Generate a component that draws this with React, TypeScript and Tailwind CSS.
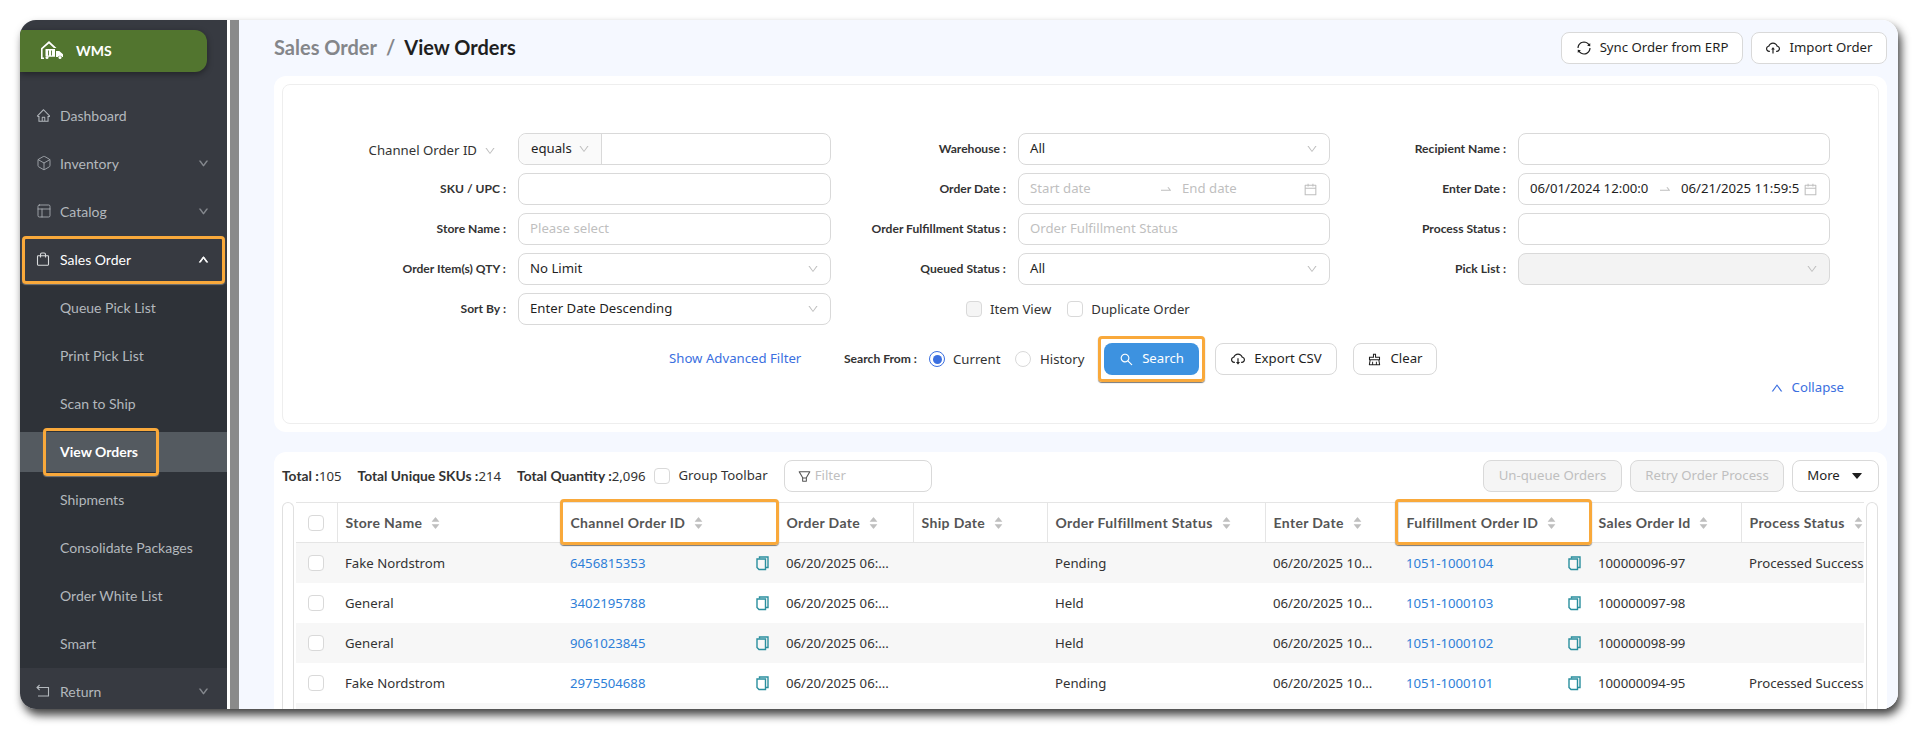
import React from "react";
import {
  AiOutlineDown, AiOutlineUp, AiFillCaretUp, AiFillCaretDown, AiOutlineSearch, AiOutlineCloudDownload,
  AiOutlineCloudUpload, AiOutlineClear, AiOutlineCalendar, AiOutlineSwapRight, AiOutlineSync, AiOutlineFilter,
  AiOutlineHome,
} from "react-icons/ai";
import { Box, PanelsTopLeft } from "lucide-react";

const noto = "font-['Noto_Sans',sans-serif]";
const lato = "font-['Lato',sans-serif]";

function Highlight({ className }: { className: string }) {
  return <div className={`pointer-events-none absolute rounded-[4px] border-[3px] border-[#f9a93b] shadow-[0_1px_1px_#777] ${className}`} />;
}

function Bag() {
  return (
    <svg width="14" height="14" viewBox="0 0 14 14" fill="none" stroke="#d8dadc" strokeWidth="1.1">
      <rect x="1.5" y="3.8" width="11" height="9.4" rx="0.6" />
      <path d="M4.5 5.5V2.4a1.4 1.4 0 0 1 1.4-1.4h2.2a1.4 1.4 0 0 1 1.4 1.4v3.1" />
    </svg>
  );
}

function ReturnIcon() {
  return (
    <svg width="14" height="14" viewBox="0 0 14 14" fill="none" stroke="#b3b8bd" strokeWidth="1.1">
      <path d="M1 3.5h11.5v8.500H2" />
      <path d="M3.600 1 1 3.500 3.600 6" />
    </svg>
  );
}

function Logo() {
  return (
    <svg width="22" height="18" viewBox="0 0 22 18" fill="white">
      <path d="M8 0 0 7.200V18h3v-1.500H1.600V8L8 2.400 12.800 7H15.500L8 0Z" />
      <path d="M4.500 8h9.500v7.800H7a2 2 0 0 0-2.500-.4V8Z" fill="white" />
      <path d="M7.500 9.500v5M10.500 9.500v5" stroke="#52752f" strokeWidth="0.9" />
      <path d="M15 10h3.300L22 13.300V16h-1a2.200 2.200 0 0 0-4 0h-2V10Z" />
      <circle cx="19" cy="16.500" r="1.500" />
      <circle cx="6" cy="16.500" r="1.500" />
    </svg>
  );
}

function NavItem({ icon, label, chevron, active }: { icon: React.ReactNode; label: string; chevron?: "up" | "down"; active?: boolean }) {
  return (
    <div className={`relative flex h-12 items-center pb-[2px] pl-4 pr-[18px] text-[14px] ${active ? "text-white" : "text-[#b3b8bd]"}`}>
      <span className="flex w-6 shrink-0 items-center">{icon}</span>
      <span className="flex-1">{label}</span>
      {chevron === "down" && <AiOutlineDown size={11} className="text-[#8b8f94]" strokeWidth={50} />}
      {chevron === "up" && <AiOutlineUp size={11} className="text-white" strokeWidth={90} />}
      {active && <Highlight className="left-[2px] right-[2px] top-0 bottom-0" />}
    </div>
  );
}

function SubItem({ label, active }: { label: string; active?: boolean }) {
  return (
    <div className={`relative mb-2 flex h-10 items-center pb-[2px] pl-10 text-[14px] last:mb-0 ${active ? "bg-[#545a60] font-bold text-white" : "text-[#b3b8bd]"}`}>
      {label}
      {active && <Highlight className="left-[23px] w-[116px] -top-1 -bottom-1" />}
    </div>
  );
}

function Sidebar() {
  return (
    <aside className={`w-[207px] shrink-0 bg-[#373a41] ${lato}`}>
      <div className="mt-[10px] flex h-[42px] w-[187px] items-center rounded-r-xl bg-[#52752f] pb-[2px] pl-[21px] text-[14px] font-bold text-white shadow-[0_2px_6px_rgba(0,0,0,0.4)]">
        <span className="mr-[13px] flex"><Logo /></span>WMS
      </div>
      <div className="mt-5">
        <NavItem icon={<AiOutlineHome size={15} />} label="Dashboard" />
        <NavItem icon={<Box size={16} strokeWidth={1.2} />} label="Inventory" chevron="down" />
        <NavItem icon={<PanelsTopLeft size={16} strokeWidth={1.2} />} label="Catalog" chevron="down" />
        <NavItem icon={<Bag />} label="Sales Order" chevron="up" active />
        <div className="bg-[#2e3238] py-1">
          <SubItem label="Queue Pick List" />
          <SubItem label="Print Pick List" />
          <SubItem label="Scan to Ship" />
          <SubItem label="View Orders" active />
          <SubItem label="Shipments" />
          <SubItem label="Consolidate Packages" />
          <SubItem label="Order White List" />
          <SubItem label="Smart" />
        </div>
        <NavItem icon={<ReturnIcon />} label="Return" chevron="down" />
      </div>
    </aside>
  );
}

function Btn({ children, className = "" }: { children: React.ReactNode; className?: string }) {
  return (
    <div className={`flex h-8 shrink-0 items-center justify-center rounded-lg border border-[#d9d9d9] bg-white text-[13.2px] text-[#1f1f1f] ${noto} ${className}`}>
      {children}
    </div>
  );
}

function Field({ label, children, plain }: { label: React.ReactNode; children: React.ReactNode; plain?: boolean }) {
  return (
    <div className="flex h-8 items-center">
      <div className={`mr-3 w-[175px] shrink-0 text-right ${plain ? "" : `pt-px text-[12.1px] font-bold text-[#333] ${lato}`}`}>{label}</div>
      <div className="min-w-0 flex-1">{children}</div>
    </div>
  );
}

function Box1({ text, placeholder, chevron, disabled }: { text?: string; placeholder?: string; chevron?: boolean; disabled?: boolean }) {
  return (
    <div className={`flex h-8 items-center justify-between rounded-lg border border-[#d9d9d9] pl-[11px] pr-[11px] text-[13.2px] ${noto} ${disabled ? "bg-[#f3f3f3]" : "bg-white"} ${placeholder ? "text-[#bfbfbf]" : "text-[#1f1f1f]"}`}>
      <span>{text ?? placeholder}</span>
      {chevron && <AiOutlineDown size={12} className="text-[#bfbfbf]" />}
    </div>
  );
}

function DateBox({ from, to, placeholder }: { from: string; to: string; placeholder?: boolean }) {
  return (
    <div className={`flex h-8 items-center rounded-lg border border-[#d9d9d9] bg-white pl-[11px] pr-[11px] text-[13.2px] ${noto} ${placeholder ? "text-[#bfbfbf]" : "text-[#1f1f1f]"}`}>
      <span className={placeholder ? "w-[129px]" : "w-[119px] whitespace-nowrap"}>{from}</span>
      <AiOutlineSwapRight size={14} className={`text-[#bfbfbf] ${placeholder ? "" : "mx-[9px]"}`} />
      <span className={placeholder ? "ml-[9px] flex-1" : "flex-1 whitespace-nowrap"}>{to}</span>
      <AiOutlineCalendar size={15} className="shrink-0 text-[#bfbfbf]" />
    </div>
  );
}

function Check({ fill }: { fill?: boolean }) {
  return <span className={`block h-4 w-4 shrink-0 rounded-[4px] border border-[#d9d9d9] ${fill ? "bg-[#f5f5f5]" : "bg-white"}`} />;
}

function Filters() {
  return (
    <div className="rounded-xl bg-white p-2">
      <div className="h-[340px] rounded-lg border border-[#eeeeee] pt-[48px]">
        <div className="flex pl-[48px]">
          <div className="flex w-[500px] flex-col gap-2">
            <Field plain label={
              <span className={`inline-flex items-center gap-[7px] pr-[10px] text-[13.2px] text-[#333] ${noto}`}>Channel Order ID<AiOutlineDown size={12} className="text-[#bfbfbf]" /></span>
            }>
              <div className={`flex h-8 rounded-lg border border-[#d9d9d9] bg-white text-[13.2px] text-[#1f1f1f] ${noto}`}>
                <div className="flex w-[83px] items-center gap-[6px] rounded-l-lg border-r border-[#d9d9d9] bg-[#fafafa] pl-[12px]">equals<AiOutlineDown size={12} className="text-[#bfbfbf]" /></div>
              </div>
            </Field>
            <Field label="SKU / UPC :"><Box1 text="" /></Field>
            <Field label="Store Name :"><Box1 placeholder="Please select" /></Field>
            <Field label="Order Item(s) QTY :"><Box1 text="No Limit" chevron /></Field>
            <Field label="Sort By :"><Box1 text="Enter Date Descending" chevron /></Field>
          </div>
          <div className="flex w-[500px] flex-col gap-2 pr-px">
            <Field label="Warehouse :"><Box1 text="All" chevron /></Field>
            <Field label="Order Date :"><DateBox from="Start date" to="End date" placeholder /></Field>
            <Field label="Order Fulfillment Status :"><Box1 placeholder="Order Fulfillment Status" /></Field>
            <Field label="Queued Status :"><Box1 text="All" chevron /></Field>
            <div className={`flex h-8 items-center pl-[135px] text-[13.2px] text-[#333] ${noto}`}>
              <Check fill /><span className="ml-2 pt-[2px]">Item View</span>
              <span className="ml-4"><Check /></span><span className="ml-2 pt-[2px]">Duplicate Order</span>
            </div>
          </div>
          <div className="flex w-[499px] flex-col gap-2">
            <Field label="Recipient Name :"><Box1 text="" /></Field>
            <Field label="Enter Date :"><DateBox from="06/01/2024 12:00:0" to="06/21/2025 11:59:5" /></Field>
            <Field label="Process Status :"><Box1 text="" /></Field>
            <Field label="Pick List :"><Box1 text="" chevron disabled /></Field>
          </div>
        </div>
        <div className={`mt-[18px] flex h-8 items-center whitespace-nowrap pl-[386px] text-[13.2px] ${noto}`}>
          <span className="w-[133px] text-[#3b6fe0]">Show Advanced Filter</span>
          <span className={`ml-[42px] w-[72px] pt-[1px] text-[12.1px] font-bold text-[#333] ${lato}`}>Search From :</span>
          <span className="ml-[13px] flex h-4 w-4 items-center justify-center rounded-full border border-[#3b6fe0] bg-white"><span className="h-[9px] w-[9px] rounded-full bg-[#3b6fe0]" /></span>
          <span className="ml-2 w-[46px] pt-[2px] text-[#333]">Current</span>
          <span className="ml-4 h-4 w-4 rounded-full border border-[#d9d9d9] bg-white" />
          <span className="ml-[9px] w-[43px] pt-[2px] text-[#333]">History</span>
          <div className="relative ml-[21px]">
            <div className="flex h-8 w-[95px] items-center justify-center gap-2 rounded-lg bg-[#3d92e0] text-white"><AiOutlineSearch size={15} />Search</div>
            <Highlight className="-inset-x-[6px] -inset-y-[7px]" />
          </div>
          <Btn className="ml-4 w-[122px] gap-2"><AiOutlineCloudDownload size={16} />Export CSV</Btn>
          <Btn className="ml-4 w-[84px] gap-2"><AiOutlineClear size={15} />Clear</Btn>
        </div>
        <div className={`mt-[3px] flex h-5 items-center justify-end gap-2 pr-[34px] text-[13.2px] text-[#3b6fe0] ${noto}`}>
          <AiOutlineUp size={14} />Collapse
        </div>
      </div>
    </div>
  );
}

function SortTh({ label, hl, last }: { label: string; hl?: string; last?: boolean }) {
  return (
    <th className={`relative h-10 px-2 text-left font-bold ${last ? "" : "border-r border-[#e5e5e5]"}`}>
      <span className="flex items-center gap-2 whitespace-nowrap">
        {label}
        <span className="flex flex-col text-[#bfbfbf]">
          <AiFillCaretUp size={11} className="-mb-[4px]" />
          <AiFillCaretDown size={11} />
        </span>
      </span>
      {hl && <Highlight className={hl} />}
    </th>
  );
}

function CopyIcon() {
  return (
    <svg width="13" height="15" viewBox="0 0 13 15" fill="none" stroke="#2a8f9e" strokeWidth="1.4" className="shrink-0">
      <path d="M3.500 2.500V1h8.500v10.500H9.500" />
      <path d="M1 3h8.500v10.500H3L1 11.500V3Z" />
    </svg>
  );
}

const rows = [
  ["Fake Nordstrom", "6456815353", "Pending", "1051-1000104", "100000096-97", "Processed Success"],
  ["General", "3402195788", "Held", "1051-1000103", "100000097-98", ""],
  ["General", "9061023845", "Held", "1051-1000102", "100000098-99", ""],
  ["Fake Nordstrom", "2975504688", "Pending", "1051-1000101", "100000094-95", "Processed Success"],
];

function OrdersTable() {
  return (
    <div className="flex gap-[2px] pt-[10px]">
      <div className="h-[220px] w-3 shrink-0 rounded-t-full border border-b-0 border-[#e0e0e0]" />
      <table className={`w-[1568px] table-fixed border-collapse text-[13.2px] text-[#333] ${noto}`}>
        <colgroup>
          <col className="w-[41px]" /><col className="w-[225px]" /><col className="w-[216px]" /><col className="w-[135px]" />
          <col className="w-[134px]" /><col className="w-[218px]" /><col className="w-[133px]" /><col className="w-[192px]" />
          <col className="w-[151px]" /><col className="w-[123px]" />
        </colgroup>
        <thead className={`border-y border-[#e5e5e5] text-[14px] tracking-[0.35px] text-[#555] ${lato}`}>
          <tr>
            <th className="h-10 border-r border-[#e5e5e5] pl-3 text-left"><Check /></th>
            <SortTh label="Store Name" />
            <SortTh label="Channel Order ID" hl="-left-[3px] right-[-1px] -top-1 -bottom-[3px]" />
            <SortTh label="Order Date" />
            <SortTh label="Ship Date" />
            <SortTh label="Order Fulfillment Status" />
            <SortTh label="Enter Date" />
            <SortTh label="Fulfillment Order ID" hl="-left-1 -right-[2px] -top-1 -bottom-[3px]" />
            <SortTh label="Sales Order Id" />
            <SortTh label="Process Status" last />
          </tr>
        </thead>
        <tbody>
          {rows.map((r, i) => (
            <tr key={r[1]} className={i % 2 === 0 ? "bg-[#f7f7f7]" : "bg-white"}>
              <td className="h-10 pl-3"><Check /></td>
              <td className="px-2 pt-[2px]">{r[0]}</td>
              <td className="px-2 pt-[2px]"><div className="flex items-center justify-between pr-px text-[#2f7fd8]"><span>{r[1]}</span><CopyIcon /></div></td>
              <td className="whitespace-nowrap px-2 pt-[2px]">06/20/2025 06:...</td>
              <td />
              <td className="px-2 pt-[2px]">{r[2]}</td>
              <td className="whitespace-nowrap px-2 pt-[2px]">06/20/2025 10...</td>
              <td className="px-2 pt-[2px]"><div className="flex items-center justify-between pr-px text-[#2f7fd8]"><span>{r[3]}</span><CopyIcon /></div></td>
              <td className="px-2 pt-[2px]">{r[4]}</td>
              <td className="whitespace-nowrap pl-2 pt-[2px]">{r[5]}</td>
            </tr>
          ))}
          <tr className="bg-[#f7f7f7]"><td colSpan={10} className="h-10" /></tr>
        </tbody>
      </table>
      <div className="h-[220px] w-3 shrink-0 rounded-t-full border border-b-0 border-[#e0e0e0]" />
    </div>
  );
}

function Label({ t, v }: { t: string; v: string }) {
  return <span className="whitespace-nowrap"><b className={`font-bold ${lato} text-[13.8px]`}>{t}</b>{v}</span>;
}

function TableCard() {
  return (
    <div className="mt-5 rounded-t-xl bg-white p-2 pb-0">
      <div className={`flex h-8 items-center text-[13.2px] text-[#333] ${noto}`}>
        <Label t="Total :" v="105" />
        <span className="ml-4"><Label t="Total Unique SKUs :" v="214" /></span>
        <span className="ml-4"><Label t="Total Quantity :" v="2,096" /></span>
        <span className="ml-[9px]"><Check /></span>
        <span className="ml-2">Group Toolbar</span>
        <div className="ml-4 flex h-8 w-[148px] items-center gap-[3px] rounded-lg border border-[#d9d9d9] bg-white pl-3 text-[#bfbfbf]">
          <AiOutlineFilter size={15} className="text-[#555]" />Filter
        </div>
        <div className="ml-auto flex gap-2">
          <Btn className="w-[139px] !bg-[#f5f5f5] !text-[#bfbfbf]">Un-queue Orders</Btn>
          <Btn className="w-[154px] !bg-[#f5f5f5] !text-[#bfbfbf]">Retry Order Process</Btn>
          <Btn className="w-[87px] gap-[10px]">More<AiFillCaretDown size={14} /></Btn>
        </div>
      </div>
      <OrdersTable />
    </div>
  );
}

function Main() {
  return (
    <main className="ml-[3px] min-w-0 flex-1 border-l-[9px] border-[#8a8a8a] bg-[#f5f8ff] pl-[35px] pr-[11px]">
      <div className="flex h-[56px] items-end pb-3">
        <div className={`flex flex-1 self-start pt-[12px] text-[20px] font-bold ${lato}`}>
          <span className="text-[#84868a]">Sales Order</span>
          <span className="mx-[9px] text-[#84868a]">/</span>
          <span className="text-[#1f1f1f]">View Orders</span>
        </div>
        <Btn className="w-[182px] gap-2"><AiOutlineSync size={16} />Sync Order from ERP</Btn>
        <Btn className="ml-2 w-[136px] gap-2"><AiOutlineCloudUpload size={16} />Import Order</Btn>
      </div>
      <Filters />
      <TableCard />
    </main>
  );
}

export default function App() {
  return (
    <div className="h-[729px] w-[1918px] overflow-hidden bg-white pl-5 pt-5">
      <div className="flex h-[689px] w-[1878px] overflow-hidden rounded-2xl bg-white shadow-[3px_6px_10px_rgba(0,0,0,0.75)]">
        <Sidebar />
        <Main />
      </div>
    </div>
  );
}
